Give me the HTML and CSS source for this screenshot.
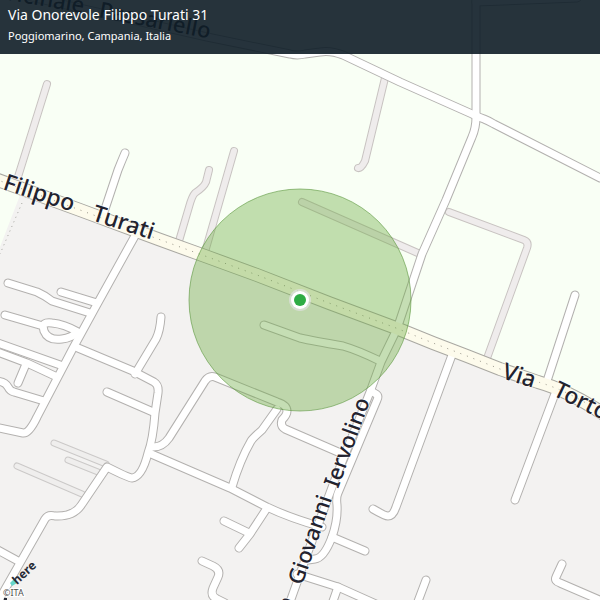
FILE: index.html
```html
<!DOCTYPE html>
<html lang="it">
<head>
<meta charset="utf-8">
<meta name="viewport" content="width=device-width, initial-scale=1">
<title>Via Onorevole Filippo Turati 31</title>
<link rel="stylesheet" href="styles.css">
</head>
<body>
<main class="map-card">
  <svg class="map" viewBox="0 0 600 600" preserveAspectRatio="xMidYMid slice" role="img" aria-label="Via Onorevole Filippo Turati 31, Poggiomarino">
    <defs>
      <g id="streets">
        <path d="M0-10L150 24L207 37L290 54Q297 56 305 54L320 52Q330 50 343 55L400 82L472 114Q478 117 484 119Q489 121 494 124L600 178"/>
        <path d="M476-5L476 117Q476 128 472 137L446 200L422 254L397 329L381 362L370 392L334 482L305 560L290 602"/>
        <path d="M476 2L577-2"/>
        <path d="M371 391L376 394Q379 396 377 400L338 493Q336 497 337 505Q338 520 332 537Q324 558 315 559L308 560"/>
        <path d="M125 153Q122 160 118 170L104 212"/>
        <path d="M575 295L546 384"/>
        <path d="M556 391L515 500"/>
        <path d="M452 355L396 507Q393 516 388 516Q385 516 373 509"/>
        <path d="M136 234L95 308L72 350L37 417Q29 434 23 433L-5 427"/>
        <path d="M8 283L37 292Q44 295 52 301L90 313"/>
        <path d="M61 292L97 303"/>
        <path d="M5 315L43 326Q44 322 52 323Q64 324 78 332Q71 338 62 339Q48 341 44 331L43 326"/>
        <path d="M-5 342L63 366"/>
        <path d="M-5 351L27 363L55 376"/>
        <path d="M26 364L18 383"/>
        <path d="M-5 381Q5 381 8 387Q10 391 14 392L44 401"/>
        <path d="M78 348L133 371L154 382Q159 385 158 393L155 413Q153 440 148 453Q142 477 132 478Q129 478 107 467L82 504Q74 517 55 516Q48 514 45 519L0 598"/>
        <path d="M161 317Q160 331 156 339L135 374"/>
        <path d="M107 392L153 412"/>
        <path d="M151 447Q162 448 169 438L205 381Q209 375 215 377L277 402Q287 405 287 411Q287 415 282 420Q280 426 285 429L345 455"/>
        <path d="M277 409L262 430Q253 438 251 441Q240 460 232 487"/>
        <path d="M149 453L230 488L267 507Q290 518 322 527"/>
        <path d="M267 508L250 534L239 548"/>
        <path d="M224 521L249 533"/>
        <path d="M332 537L365 551"/>
        <path d="M202 561L213 566Q221 570 218 577L213 588Q210 596 217 599L225 603"/>
        <path d="M297 574L338 587L376 604"/>
        <path d="M338 587L332 604"/>
        <path d="M426 580L417 604"/>
        <path d="M562 564L556 577Q554 581 560 583L604 602"/>
        <path d="M-4 549L18 561"/>
        <path d="M264 325L300 338Q313 341 343 346Q357 350 380 361"/>
      </g>
      <g id="tracks">
        <path d="M47 84L17 180"/>
        <path d="M209 170L206 182Q204 187 195 193Q192 196 189 207L179 241"/>
        <path d="M234 151L205 252"/>
        <path d="M385 78L365 161Q361 169 358 168"/>
        <path d="M302 202L420 254"/>
        <path d="M449 212L524 240Q529 242 527 248L486 361"/>
      </g>
      <g id="drives">
        <path d="M54 443L106 464"/>
        <path d="M68 460L98 472"/>
        <path d="M17 466L82 494"/>
      </g>
      <path id="avenue" d="M-5 179L80 210L158 239L205 256L257 275L329 303L396 328L433 343L467 356L500 369L538 382Q570 391 608 417"/>
    </defs>

    <rect class="field" x="-600" y="-600" width="1800" height="1800"/>
    <path class="town" d="M22 190L80 209L205 255L396 328L500 369L538 382Q570 391 608 417V610H-5V260Z"/>
    <path class="boundary" d="M22 203L0 254"/>

    <use href="#drives" class="drive-edge"/>
    <use href="#drives" class="drive"/>
    <use href="#tracks" class="track-edge"/>
    <use href="#tracks" class="track"/>
    <use href="#streets" class="street-edge"/>
    <use href="#avenue" class="avenue-edge"/>
    <use href="#streets" class="street"/>
    <use href="#avenue" class="avenue"/>
    <use href="#avenue" class="avenue-dots"/>

    <g class="label">
      <text transform="translate(2 189) rotate(18)">Filippo</text>
      <text transform="translate(91 220) rotate(18)">Turati</text>
      <text transform="translate(501 378) rotate(17)">Via</text>
      <text transform="translate(552 395) rotate(26)">Tortorelle</text>
    </g>
    <g class="label label-small">
      <text transform="translate(3 -1) rotate(10)">Vicinale</text>
      <text transform="translate(98 17) rotate(11)">Passariello</text>
      <text transform="translate(302 586) rotate(-71)">Giovanni</text>
      <text transform="translate(338 489) rotate(-70)">Iervolino</text>
      <text transform="translate(295 600) rotate(-70)" text-anchor="end">Via</text>
    </g>

    <circle class="area" cx="300" cy="300" r="111"/>
    <circle class="pin-halo" cx="300" cy="300" r="11"/>
    <circle class="pin-ring" cx="300" cy="300" r="9"/>
    <circle class="pin" cx="300" cy="300" r="6"/>

    <path class="brand-mark" d="M10 583L14 579L17 583L12 586Z"/>
    <text class="brand" transform="translate(17 585) rotate(-43)">here</text>
    <text class="credit" x="3" y="596">©ITA</text>
    <path class="brand-tick" d="M4 600V598H7V600Z"/>
  </svg>

  <header class="banner">
    <h1 class="street-name">Via Onorevole Filippo Turati 31</h1>
    <p class="place">Poggiomarino, Campania, Italia</p>
  </header>
</main>
</body>
</html>
```

FILE: styles.css
```css
* {
  box-sizing: border-box;
}

body {
  margin: 0;
  font-family: "Noto Sans", "Open Sans", sans-serif;
}

.map-card {
  position: relative;
  min-height: 100vh;
  overflow: hidden;
}

.map {
  display: block;
  width: 100%;
  height: 100vh;
}

/* The banner lies over the top of the map */
.banner {
  position: absolute;
  top: 0;
  left: 0;
  right: 0;
  padding: 5px 8px 9px;
  background: rgba(14, 29, 39, 0.9);
  color: #fff;
}

.street-name {
  margin: 0;
  font-size: 14px;
  line-height: 20px;
  font-weight: 400;
}

.place {
  margin: 2px 0 0;
  font-size: 11px;
  line-height: 18px;
}

.field {
  fill: #f9fff5;
}

.town {
  fill: #f3f2f1;
}

.boundary {
  fill: none;
  stroke: #a3a39d;
  stroke-width: 1;
  stroke-dasharray: 1 4;
}

.street,
.street-edge,
.track,
.track-edge,
.drive,
.drive-edge,
.avenue,
.avenue-edge,
.avenue-dots {
  fill: none;
  stroke-linecap: round;
  stroke-linejoin: round;
}

.street-edge {
  stroke: #b3b1af;
  stroke-width: 9;
}

.street {
  stroke: #fff;
  stroke-width: 7;
}

.track-edge {
  stroke: #c8c3c1;
  stroke-width: 8;
}

.track {
  stroke: #efecec;
  stroke-width: 6;
}

.drive-edge {
  stroke: #cbc9c8;
  stroke-width: 7;
}

.drive {
  stroke: #efeeed;
  stroke-width: 5;
}

.avenue-edge {
  stroke: #a9a8a2;
  stroke-width: 14;
}

.avenue {
  stroke: #fdfbec;
  stroke-width: 12;
}

.avenue-dots {
  stroke: #99968a;
  stroke-width: 1;
  stroke-linecap: butt;
  stroke-dasharray: 1 6;
}

.label {
  fill: #23232f;
  font-size: 23px;
  font-weight: 500;
  stroke: rgba(255, 255, 255, 0.5);
  stroke-width: 2;
  paint-order: stroke;
}

.label-small {
  font-size: 22px;
}

.area {
  fill: rgba(109, 172, 67, 0.4);
  stroke: rgba(90, 150, 60, 0.6);
  stroke-width: 1;
}

.pin-halo {
  fill: rgba(225, 225, 225, 0.7);
}

.pin-ring {
  fill: #fff;
}

.pin {
  fill: #2fac44;
}

.brand-mark {
  fill: #65d5cb;
}

.brand-tick {
  fill: #262a36;
}

.brand {
  fill: #262a36;
  font-size: 12px;
  font-weight: 700;
}

.credit {
  fill: #505050;
  font-size: 9px;
  stroke: #fff;
  stroke-width: 2;
  paint-order: stroke;
}
```
